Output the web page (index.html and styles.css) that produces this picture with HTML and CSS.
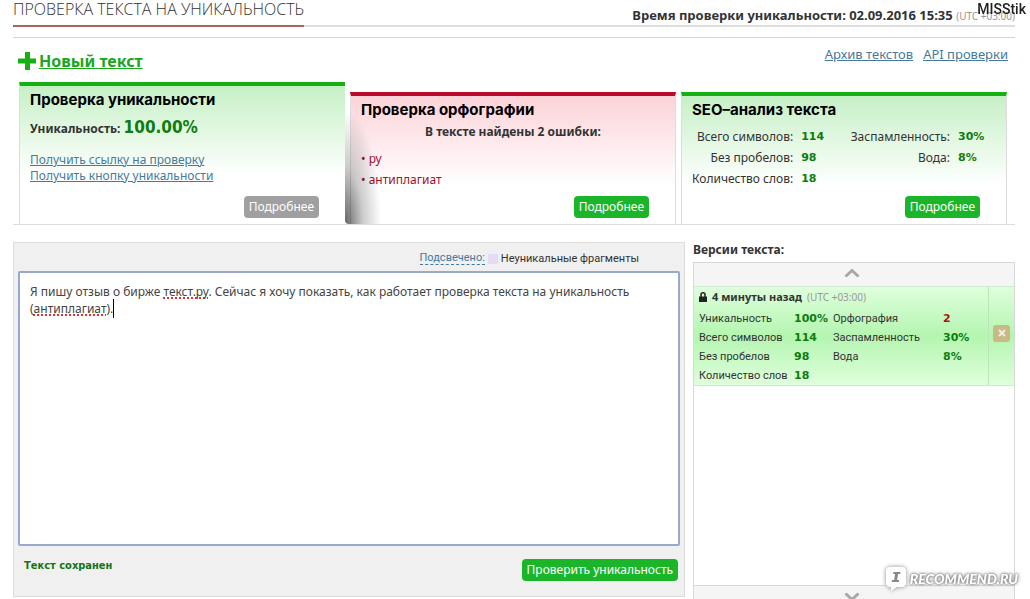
FILE: index.html
```html
<!DOCTYPE html>
<html lang="ru">
<head>
<meta charset="utf-8">
<meta name="viewport" content="width=device-width, initial-scale=1">
<title>Проверка текста на уникальность</title>
<link rel="stylesheet" href="styles.css">
</head>
<body>
<div class="page">
  <header class="header">
    <h1 class="header-title">ПРОВЕРКА ТЕКСТА НА УНИКАЛЬНОСТЬ</h1>
    <p class="header-time">Время проверки уникальности: 02.09.2016 15:35 <span class="utc">(UTC +03:00)</span></p>
  </header>

  <nav class="toolbar">
    <a class="new-text" href="#">
      <svg class="plus" viewBox="0 0 18 18" aria-hidden="true"><path d="M7 0h5v6.500h6v5h-6V18H7v-6.500H0v-5h7z"/></svg>
      <span class="new-text-label">Новый текст</span>
    </a>
    <div class="toolbar-links">
      <a class="link" href="#">Архив текстов</a>
      <a class="link" href="#">API проверки</a>
    </div>
  </nav>

  <section class="cards">
    <article class="card card-active">
      <h2 class="card-title">Проверка уникальности</h2>
      <p class="unique">Уникальность: <strong class="unique-value">100.00%</strong></p>
      <div class="card-links">
        <a class="link" href="#">Получить ссылку на проверку</a>
        <a class="link" href="#">Получить кнопку уникальности</a>
      </div>
      <button class="button button-muted" type="button">Подробнее</button>
    </article>
    <article class="card card-spelling">
      <h2 class="card-title">Проверка орфографии</h2>
      <p class="spelling-summary">В тексте найдены 2 ошибки:</p>
      <ul class="errors">
        <li>ру</li>
        <li>антиплагиат</li>
      </ul>
      <button class="button" type="button">Подробнее</button>
    </article>
    <article class="card">
      <h2 class="card-title">SEO–анализ текста</h2>
      <table class="seo">
        <tr><th scope="row">Всего символов:</th><td>114</td><th scope="row">Заспамленность:</th><td>30%</td></tr>
        <tr><th scope="row">Без пробелов:</th><td>98</td><th scope="row">Вода:</th><td>8%</td></tr>
        <tr><th scope="row">Количество слов:</th><td>18</td></tr>
      </table>
      <button class="button" type="button">Подробнее</button>
    </article>
  </section>

  <main class="workspace">
    <form class="editor">
      <div class="legend">
        <a class="legend-link" href="#">Подсвечено:</a>
        <span class="swatch"></span>
        <label for="text">Неуникальные фрагменты</label>
      </div>
      <div class="field">
        <div class="marks" aria-hidden="true">Я пишу отзыв о бирже <span class="typo">текст.ру</span>. Сейчас я хочу показать, как работает проверка текста на уникальность (<span class="typo">антиплагиат</span>).<span class="caret"></span></div>
        <textarea class="text" id="text" spellcheck="false">Я пишу отзыв о бирже текст.ру. Сейчас я хочу показать, как работает проверка текста на уникальность (антиплагиат).</textarea>
      </div>
      <div class="editor-footer">
        <span class="saved">Текст сохранен</span>
        <button class="button" type="button">Проверить уникальность</button>
      </div>
    </form>

    <aside class="versions">
      <h2 class="versions-title">Версии текста:</h2>
      <div class="versions-box">
        <button class="scroll" type="button" aria-label="Вверх">
          <svg class="chevron" viewBox="0 0 16 10" aria-hidden="true"><path d="M1.500 8.500 8 2.500l6.500 6"/></svg>
        </button>
        <div class="version">
          <div class="version-info">
            <p class="version-head">
              <svg class="lock" viewBox="0 0 8 10" aria-hidden="true"><path class="lock-arc" d="M2 5V2.800a2 2 0 0 1 4 0V5"/><path d="M0 4.500h8V10H0z"/></svg>
              <strong>4 минуты назад</strong> <span class="utc">(UTC +03:00)</span>
            </p>
            <table class="stats">
              <tr><th scope="row">Уникальность</th><td>100%</td><th scope="row">Орфография</th><td class="bad">2</td></tr>
              <tr><th scope="row">Всего символов</th><td>114</td><th scope="row">Заспамленность</th><td>30%</td></tr>
              <tr><th scope="row">Без пробелов</th><td>98</td><th scope="row">Вода</th><td>8%</td></tr>
              <tr><th scope="row">Количество слов</th><td>18</td></tr>
            </table>
          </div>
          <div class="version-side">
            <button class="delete" type="button" aria-label="Удалить">
              <svg class="cross" viewBox="0 0 8 8" aria-hidden="true"><path d="m1 1 6 6M7 1 1 7"/></svg>
            </button>
          </div>
        </div>
        <div class="versions-space"></div>
        <button class="scroll scroll-down" type="button" aria-label="Вниз">
          <svg class="chevron" viewBox="0 0 16 10" aria-hidden="true"><path d="m1.500 1.500 6.500 6 6.500-6"/></svg>
        </button>
      </div>
    </aside>
  </main>
</div>

<div class="author">MISStik</div>
<div class="watermark">
  <svg class="bubble" viewBox="0 0 20 24" aria-hidden="true"><path class="bubble-body" d="M4 0h12q4 0 4 4v12q0 4-4 4h-5l-6 4v-4H4q-4 0-4-4V4q0-4 4-4z"/><path class="bubble-mark" d="M7.500 5h7l-.4 2h-2l-1 6h2l-.4 2h-7l.4-2h2l1-6h-2z"/></svg>
  <span>RECOMMEND.RU</span>
</div>
</body>
</html>
```
FILE: styles.css
```css
* {
  box-sizing: border-box;
}

html,
body {
  height: 100%;
}

body {
  margin: 0;
  overflow: hidden;
  background: #fff;
  color: #333;
  font: 12px/16px "Noto Sans", "Open Sans", sans-serif;
}

h1,
h2,
p,
ul {
  margin: 0;
  padding: 0;
}

button {
  border: 0;
  font: inherit;
  cursor: pointer;
}

table {
  border-collapse: collapse;
}

th,
td {
  padding: 0;
  text-align: left;
  white-space: nowrap;
}

th {
  font-weight: 400;
}

.page {
  padding: 0 15px 0 13px;
}

.link {
  color: #457a9c;
}

.utc {
  color: #999;
  font: 10px/16px "Noto Sans", sans-serif;
}

/* Header */
.header {
  display: flex;
  justify-content: space-between;
  height: 38px;
  border-bottom: 1px solid #d4d4d4;
  background: linear-gradient(#dedede, #dedede) 0 25px / 100% 2px no-repeat;
}

.header-title {
  height: 27px;
  border-bottom: 2px solid #a8635c;
  font: 300 16px/18px "Open Sans", sans-serif;
}

.header-time {
  padding-top: 7px;
  font-size: 13px;
  font-weight: 700;
}

/* Toolbar */
.toolbar {
  display: flex;
  justify-content: space-between;
  height: 44px;
  padding: 6px 7px 0 5px;
}

.new-text {
  display: flex;
  align-items: center;
  gap: 3px;
  height: 34px;
  color: #1ba61b;
  text-decoration: none;
}

.new-text-label {
  font-size: 16px;
  font-weight: 700;
  text-decoration: underline;
}

.plus {
  width: 18px;
  height: 18px;
  fill: #14b014;
}

.toolbar-links {
  display: flex;
  gap: 10px;
  font-size: 13px;
  line-height: 20px;
}

/* Cards */
.cards {
  display: grid;
  grid-template-columns: repeat(3, 1fr);
  gap: 5px;
  padding: 0 8px 0 6px;
  border-bottom: 1px solid #ddd;
}

.card {
  position: relative;
  display: flex;
  flex-direction: column;
  margin-top: 10px;
  padding: 5px 26px 6px 10px;
  border: 1px solid #ddd;
  border-width: 4px 1px 0;
  border-top-color: #14b014;
  background: linear-gradient(#c6f0c6, #fff 90px);
}

.card-active {
  min-height: 142px;
  margin-top: 0;
  border-right: 0;
}

.card-spelling {
  border-top-color: #b90c2c;
  background: linear-gradient(#fbd3d8, #fff 90px);
}

.card-spelling::before {
  content: "";
  position: absolute;
  left: -6px;
  bottom: 0;
  width: 36px;
  height: 115px;
  border-bottom-left-radius: 4px;
  background: radial-gradient(farthest-side at 0 100%, rgb(0 0 0 / 60%), rgb(0 0 0 / 20%) 50%, transparent);
}

.card-title {
  color: #000;
  font: 700 15px/18px Inter, sans-serif;
}

.card .button {
  align-self: flex-end;
  margin-top: auto;
}

.unique {
  padding-top: 8px;
  font-weight: 700;
  line-height: 20px;
}

.unique-value {
  color: #0d7d0d;
  font: 700 17px/20px "DejaVu Sans Condensed", "DejaVu Sans", sans-serif;
}

.card-links {
  display: flex;
  flex-direction: column;
  align-items: flex-start;
  padding-top: 13px;
}

.spelling-summary {
  margin-right: -16px;
  padding: 5px 0 8px;
  font-weight: 700;
  text-align: center;
}

.errors {
  color: #a01030;
  line-height: 21px;
  list-style: none;
}

.errors li::before {
  content: "• ";
}

.seo {
  align-self: flex-start;
  margin: 7px -20px 0 0;
  line-height: 21px;
}

.seo th {
  width: 101px;
  text-align: right;
}

.seo td {
  width: 53px;
  padding-left: 8px;
}

.seo td:nth-child(2) {
  width: 61px;
}

.seo td,
.stats td {
  color: #0d7d0d;
  font-family: "DejaVu Sans", sans-serif;
  font-size: 11px;
  font-weight: 700;
}

.button {
  height: 22px;
  padding: 0 5px;
  border-radius: 4px;
  background: #1bb52a;
  color: #fff;
  line-height: 22px;
  white-space: nowrap;
}

.button-muted {
  background: #a0a0a0;
}

/* Editor */
.workspace {
  display: grid;
  grid-template-columns: 672fr 322fr;
  gap: 8px;
  padding-top: 17px;
}

.editor {
  align-self: start;
  padding: 0 4px;
  border: 1px solid #dcdcdc;
  background: #f0f0f0;
}

.legend {
  display: flex;
  align-items: center;
  justify-content: flex-end;
  gap: 3px;
  height: 28px;
  padding: 3px 41px 0 0;
  font: 11px/16px Roboto, sans-serif;
}

.legend-link {
  border-bottom: 1px dashed #457a9c;
  color: #457a9c;
  line-height: 12px;
  text-decoration: none;
}

.swatch {
  width: 10px;
  height: 10px;
  background: #e6daf5;
}

.field {
  display: grid;
  height: 275px;
  border: 2px solid #98a8cf;
  border-radius: 2px;
  background: #fff;
}

.marks,
.text {
  grid-area: 1 / 1;
  margin: 0;
  padding: 10px;
  border: 0;
  font: 12px/17px "Noto Sans", "Open Sans", sans-serif;
  white-space: pre-wrap;
}

.marks {
  color: transparent;
}

.text {
  width: 100%;
  outline: 0;
  background: transparent;
  color: #444;
  resize: none;
}

.typo {
  text-decoration: underline dotted #d33 2px;
  text-decoration-skip-ink: none;
  text-underline-offset: 1px;
}

.caret {
  padding: 1px 0;
  border-left: 1px solid #000;
}

.editor-footer {
  display: flex;
  align-items: center;
  justify-content: space-between;
  height: 50px;
  padding: 0 2px 2px 6px;
}

.saved {
  padding-bottom: 8px;
  color: #147514;
  font: 700 11px/16px "DejaVu Sans Condensed", "DejaVu Sans", sans-serif;
}

/* Versions */
.versions-title {
  height: 20px;
  font-size: 12px;
  line-height: 16px;
}

.versions-box {
  border: 1px solid #d8d8d8;
}

.scroll {
  display: flex;
  align-items: center;
  justify-content: center;
  width: 100%;
  height: 23px;
  padding: 0 4px 4px 0;
  background: #f5f5f5;
}

.scroll-down {
  padding: 0 4px 0 0;
  border-top: 1px solid #d8d8d8;
}

.chevron {
  width: 16px;
  height: 10px;
  fill: none;
  stroke: #a8a8a8;
  stroke-width: 3;
}

.version {
  display: flex;
  height: 100px;
  border: 1px solid #cdeccd;
  border-width: 1px 0;
  background: linear-gradient(#dfffdc, #b4f5b0 50%, #dfffdc);
  font-size: 11px;
}

.version-info {
  flex: 1;
  padding: 2px 0 0 5px;
}

.version-head {
  display: flex;
  align-items: center;
  gap: 5px;
  padding-bottom: 4px;
}

.lock {
  width: 8px;
  height: 10px;
  fill: #222;
}

.lock-arc {
  fill: none;
  stroke: #222;
  stroke-width: 1.5;
}

.stats {
  font: 11px/19px Roboto, sans-serif;
}

.stats th:first-child {
  width: 95px;
}

.stats td {
  width: 39px;
}

.stats th:nth-child(3) {
  width: 110px;
}

.stats .bad {
  color: #b01010;
}

.version-side {
  display: flex;
  align-items: center;
  justify-content: center;
  width: 26px;
  padding-bottom: 6px;
  border-left: 1px solid #b8e6b8;
}

.delete {
  display: flex;
  align-items: center;
  justify-content: center;
  width: 17px;
  height: 17px;
  padding: 0;
  border-radius: 3px;
  background: #c9b987;
}

.cross {
  width: 8px;
  height: 8px;
  stroke: #f3eedd;
  stroke-width: 2;
}

.versions-space {
  height: 199px;
}

/* Overlays */
.author {
  position: fixed;
  top: 0;
  right: 4px;
  color: #222;
  font: 500 14px/18px Roboto, sans-serif;
}

.watermark {
  position: fixed;
  right: 12px;
  bottom: 8px;
  display: flex;
  align-items: center;
  gap: 4px;
  color: #fff;
  font: italic 900 14px/20px Lato, sans-serif;
  text-shadow: 0 0 2px #777, 0 0 3px #888, 0 0 4px #999;
}

.bubble {
  width: 20px;
  height: 24px;
  overflow: visible;
  filter: drop-shadow(0 0 2px #888);
}

.bubble-body {
  fill: #fff;
}

.bubble-mark {
  fill: #888;
}
```
